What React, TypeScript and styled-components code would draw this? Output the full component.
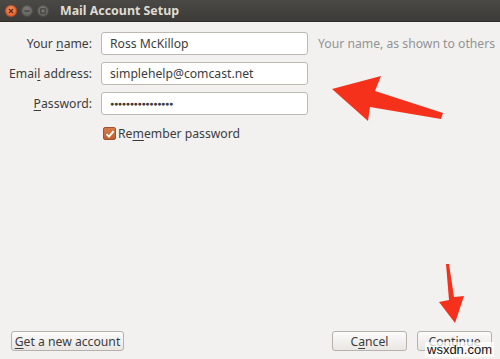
import React from "react";
import styled, { createGlobalStyle } from "styled-components";

const Global = createGlobalStyle`
  html, body { margin: 0; padding: 0; }
  body { background: #f2f1f0; font-family: "Noto Sans", "Open Sans", sans-serif; }
`;

const Window = styled.div`
  position: relative;
  width: 500px;
  height: 359px;
  display: flex;
  flex-direction: column;
  background: #f2f1f0;
  overflow: hidden;
  color: #3c3c3c;
  font-size: 12.2px;
`;

const TitleBar = styled.div`
  height: 22px;
  display: flex;
  align-items: center;
  background: linear-gradient(#4a4945, #3c3b37);
  padding-left: 5px;
  gap: 4px;
  border-bottom: 1px solid #2e2d2a;
  box-sizing: border-box;
`;

const Ctrl = styled.div<{ $close?: boolean }>`
  width: 12px;
  height: 12px;
  border-radius: 50%;
  background: ${(p) =>
    p.$close
      ? "radial-gradient(circle at 50% 35%, #f68a5c, #e0541f)"
      : "radial-gradient(circle at 50% 35%, #7a7975, #5a5955)"};
  display: flex;
  align-items: center;
  justify-content: center;
  box-shadow: inset 0 0 0 1px rgba(0,0,0,0.25);
`;

const Title = styled.div`
  margin-left: 7px;
  color: #dfdbd2;
  font-weight: bold;
  font-size: 12.4px;
`;

const Content = styled.div`
  flex: 1;
  display: grid;
  grid-template-columns: 92px 207px auto;
  grid-auto-rows: 23px;
  column-gap: 9px;
  row-gap: 7px;
  padding-top: 10px;
  align-content: start;
`;

const Label = styled.div`
  text-align: right;
  align-self: center;
  white-space: nowrap;
`;

const Field = styled.div`
  box-sizing: border-box;
  height: 23px;
  border: 1px solid #bdb9b2;
  border-radius: 3px;
  background: #ffffff;
  padding-left: 8px;
  display: flex;
  align-items: center;
  color: #3c3c3c;
  white-space: nowrap;
`;

const Dots = styled.span`
  font-size: 7px;
  letter-spacing: -0.3px;
  color: #3c3c3c;
`;

const Hint = styled.div`
  align-self: center;
  color: #939393;
  margin-left: 1px;
  white-space: nowrap;
`;

const CheckRow = styled.div`
  grid-column: 2 / 4;
  display: flex;
  align-items: center;
  gap: 2px;
  padding-left: 2px;
`;

const Box = styled.div`
  width: 13px;
  height: 13px;
  border-radius: 2px;
  background: linear-gradient(#d77a4b, #c0602f);
  border: 1px solid #a4502a;
  box-sizing: border-box;
  display: flex;
  align-items: center;
  justify-content: center;
`;

const Footer = styled.div`
  display: flex;
  align-items: center;
  padding: 0 8px 8px 11px;
  gap: 10px;
`;

const Spacer = styled.div`
  flex: 1;
`;

const Button = styled.div<{ $w: number }>`
  box-sizing: border-box;
  width: ${(p) => p.$w}px;
  height: 20px;
  border: 1px solid #b6b2ab;
  border-radius: 3px;
  background: linear-gradient(#fbfbfa, #e9e7e4);
  display: flex;
  align-items: center;
  justify-content: center;
  color: #3c3c3c;
  white-space: nowrap;
`;

const U = styled.span`
  text-decoration: underline;
  text-underline-offset: 2px;
`;

const Overlay = styled.svg`
  position: absolute;
  left: 0;
  top: 0;
  pointer-events: none;
`;

const Watermark = styled.div`
  position: absolute;
  left: 425px;
  top: 342px;
  font-family: "Liberation Sans", Arial, sans-serif;
  font-size: 13px;
  color: #111;
  background: rgba(255,255,255,0.75);
  padding: 0 2px;
  line-height: 15px;
`;

export default function App() {
  return (
    <>
      <Global />
      <Window>
        <TitleBar>
          <Ctrl $close>
            <svg width="6" height="6" viewBox="0 0 6 6">
              <path d="M1 1L5 5M5 1L1 5" stroke="#5a2a14" strokeWidth="1.2" />
            </svg>
          </Ctrl>
          <Ctrl>
            <svg width="6" height="6" viewBox="0 0 6 6">
              <path d="M0.5 3H5.5" stroke="#3a3935" strokeWidth="1.2" />
            </svg>
          </Ctrl>
          <Ctrl>
            <svg width="6" height="6" viewBox="0 0 6 6">
              <rect x="0.8" y="0.8" width="4.4" height="4.4" fill="none" stroke="#3a3935" strokeWidth="1" />
            </svg>
          </Ctrl>
          <Title>Mail Account Setup</Title>
        </TitleBar>
        <Content>
          <Label>
            Your <U>n</U>ame:
          </Label>
          <Field>Ross McKillop</Field>
          <Hint>Your name, as shown to others</Hint>

          <Label>
            Emai<U>l</U> address:
          </Label>
          <Field>simplehelp@comcast.net</Field>
          <div />

          <Label>
            <U>P</U>assword:
          </Label>
          <Field>
            <Dots>●●●●●●●●●●●●●●●●</Dots>
          </Field>
          <div />

          <div />
          <CheckRow>
            <Box>
              <svg width="10" height="10" viewBox="0 0 10 10">
                <path d="M1.5 5.2L4 7.6L8.6 2.2" fill="none" stroke="#ffffff" strokeWidth="1.8" />
              </svg>
            </Box>
            <span>
              Re<U>m</U>ember password
            </span>
          </CheckRow>
        </Content>
        <Footer>
          <Button $w={113}>
            <U>G</U>et a new account
          </Button>
          <Spacer />
          <Button $w={75}>
            C<U>a</U>ncel
          </Button>
          <Button $w={75}>Continue</Button>
        </Footer>
        <Overlay width="500" height="359" viewBox="0 0 500 359">
          <path
            d="M332 89 L381 76 L375 91 L443 113 L441 119 L370 107 L368 121 Z"
            fill="#f5311b"
          />
          <path
            d="M446 264 L449 264 L454 297 L464 296 L455 323 L439 302 L449 300 Z"
            fill="#f5311b"
          />
        </Overlay>
        <Watermark>wsxdn.com</Watermark>
      </Window>
    </>
  );
}
